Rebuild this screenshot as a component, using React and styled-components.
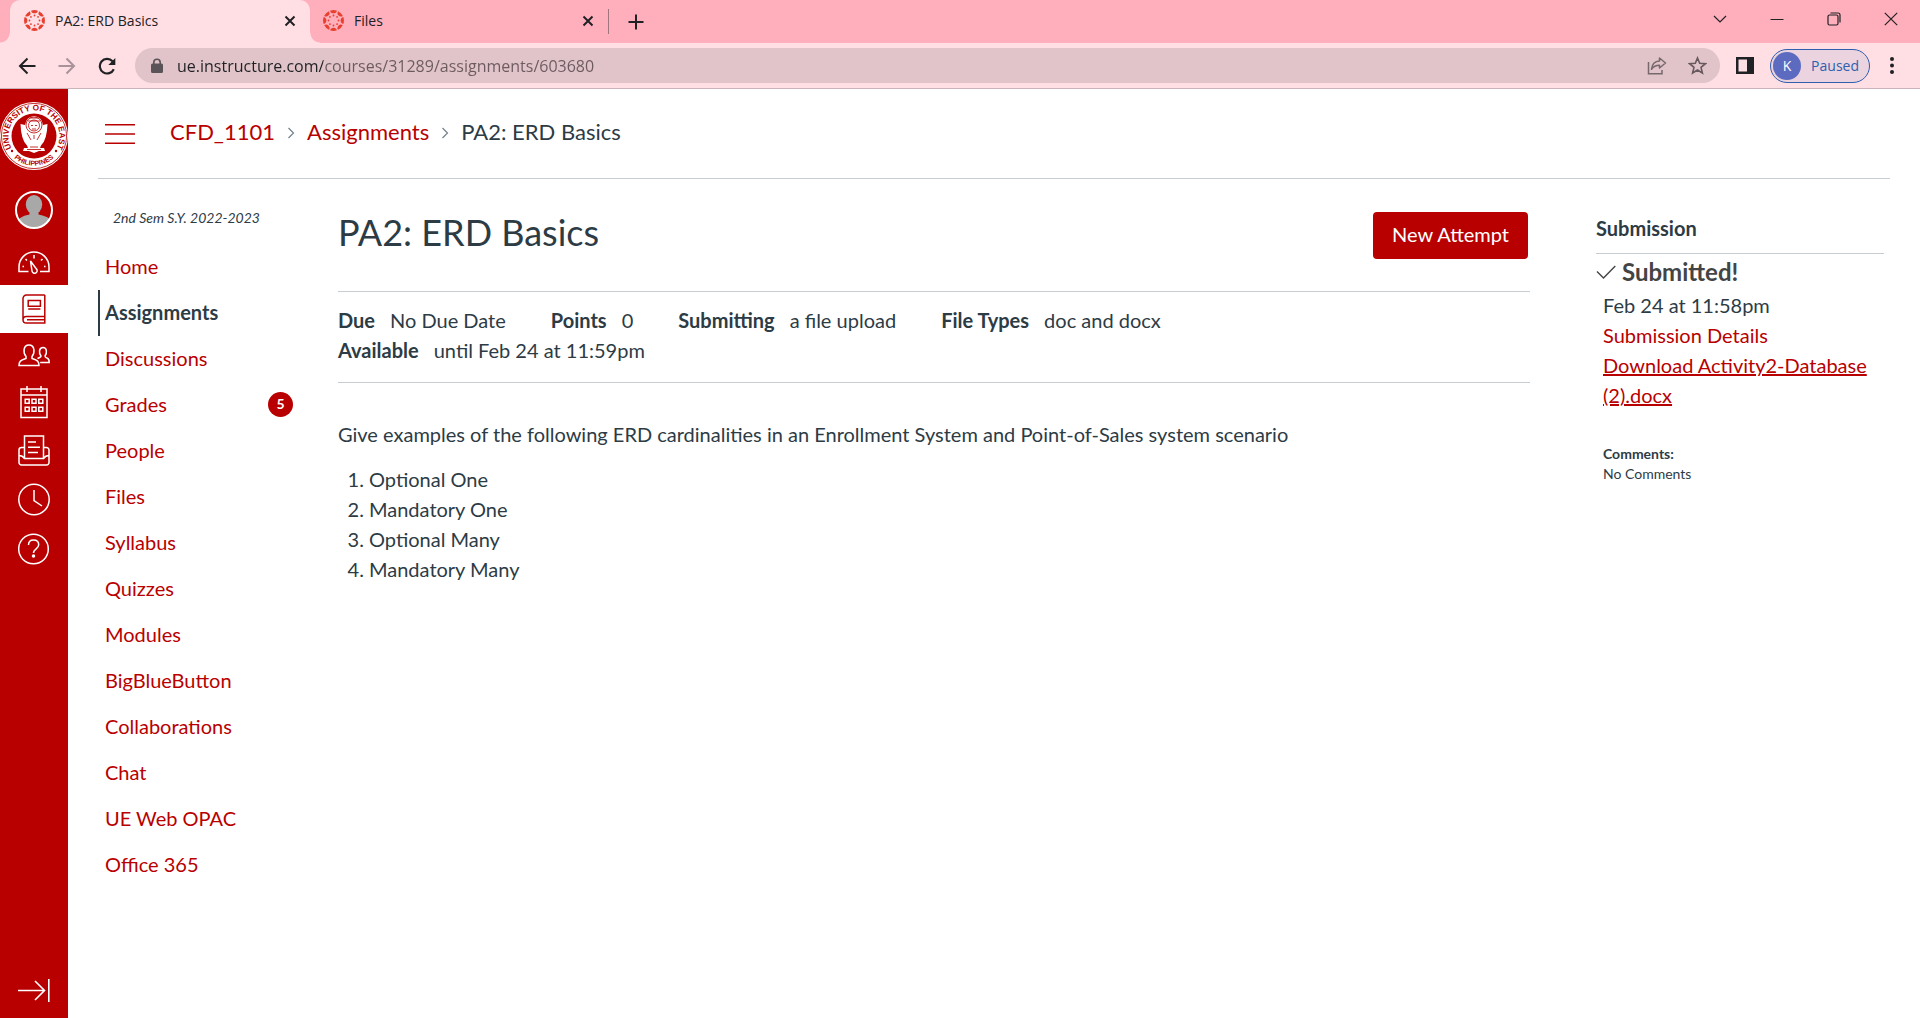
import React from "react";
import styled, { createGlobalStyle } from "styled-components";

const RED = "#b90000";
const INK = "#2d3b45";
const RULE = "#c7cdd1";
const CHROME_FONT = '"Open Sans", "Noto Sans", sans-serif';

const GlobalStyle = createGlobalStyle`
  *, *::before, *::after { box-sizing: border-box; }
  body { margin: 0; background: #fff; color: ${INK}; font: 20px/30px Lato, "Liberation Sans", sans-serif; }
  a { color: ${RED}; text-decoration: none; }
  button { font: inherit; color: inherit; border: 0; background: none; padding: 0; cursor: pointer; }
  svg { display: block; flex: none; }
`;

const Page = styled.div`
  display: flex;
  flex-direction: column;
  min-height: 100vh;
`;

/* ---------- browser chrome ---------- */

const TabStrip = styled.div`
  display: flex;
  align-items: center;
  height: 43px;
  padding: 0 0 0 10px;
  background: #ffaebc;
  color: #202124;
  font: 14px/20px ${CHROME_FONT};
`;

const Tab = styled.div`
  position: relative;
  display: flex;
  align-items: center;
  gap: 10px;
  width: ${(p) => (p.$active ? 300 : 298)}px;
  height: 43px;
  padding: 0 12px 2px ${(p) => (p.$active ? 14 : 13)}px;
  border-radius: 10px 10px 0 0;
  background: ${(p) => (p.$active ? "#ffdee4" : "transparent")};
  ${(p) =>
    p.$active &&
    `
    &::before, &::after {
      content: "";
      position: absolute;
      bottom: 0;
      width: 10px;
      height: 10px;
    }
    &::before {
      left: -10px;
      background: radial-gradient(circle at 0 0, transparent 9px, #ffdee4 10px);
    }
    &::after {
      right: -10px;
      background: radial-gradient(circle at 100% 0, transparent 9px, #ffdee4 10px);
    }
  `}
`;

const TabTitle = styled.span`
  flex: 1;
`;

const IconButton = styled.button`
  display: grid;
  place-items: center;
  width: ${(p) => p.$w || 20}px;
  height: ${(p) => p.$h || 20}px;
`;

const TabDivider = styled.span`
  width: 1px;
  height: 25px;
  margin-right: 17px;
  background: #a0757d;
`;

const WindowControls = styled.div`
  display: flex;
  align-items: center;
  margin-left: auto;
  height: 37px;
  align-self: flex-start;
`;

const Toolbar = styled.div`
  display: flex;
  align-items: center;
  height: 46px;
  padding: 0 18px 0 7px;
  background: #ffdee4;
  border-bottom: 1px solid #cbb3ba;
  color: #202124;
  font-family: ${CHROME_FONT};
`;

const AddressBar = styled.label`
  display: flex;
  align-items: center;
  flex: 1;
  height: 35px;
  margin-left: 8px;
  padding: 0 7px 0 16px;
  border-radius: 18px;
  background: #e0c4c9;
`;

const AddressInput = styled.input`
  flex: 1;
  min-width: 0;
  height: 30px;
  margin-left: 14px;
  padding: 0;
  border: 0;
  outline: 0;
  font: 16px/24px ${CHROME_FONT};
  color: #6b5a5e;
  background: linear-gradient(90deg, #202124 146px, #6b5a5e 146px);
  background-clip: text;
  -webkit-background-clip: text;
  -webkit-text-fill-color: transparent;
`;

const ProfileChip = styled.button`
  display: flex;
  align-items: center;
  gap: 10px;
  height: 34px;
  margin: 0 12px 0 0;
  padding: 0 10px 0 2px;
  border: 1px solid #2f5fae;
  border-radius: 18px;
  background: #ebd3e0;
  color: #2f5fae;
  font-size: 14px;
  line-height: 20px;
`;

const ProfileInitial = styled.span`
  width: 28px;
  height: 28px;
  border-radius: 50%;
  background: #5c6bc0;
  color: #fff;
  line-height: 28px;
  text-align: center;
`;

/* ---------- global navigation ---------- */

const Workspace = styled.div`
  display: flex;
  flex: 1;
`;

const GlobalNav = styled.nav`
  display: flex;
  flex-direction: column;
  flex: none;
  width: 68px;
  padding-top: 10px;
  background: ${RED};
`;

const NavLink = styled.a`
  display: grid;
  place-items: center;
  height: ${(p) => p.$h || 49}px;
  margin-bottom: ${(p) => p.$gap || 0}px;
  color: ${(p) => (p.$active ? RED : "#fff")};
  background: ${(p) => (p.$active ? "#fff" : "transparent")};
`;

const CollapseButton = styled.button`
  display: grid;
  place-items: center;
  height: 56px;
  margin-top: auto;
  color: #fff;
`;

/* ---------- page ---------- */

const Main = styled.div`
  flex: 1;
  min-width: 0;
  padding: 0 30px;
`;

const Header = styled.header`
  display: flex;
  align-items: center;
  gap: 35px;
  height: 90px;
  padding-left: 7px;
  border-bottom: 1px solid ${RULE};
`;

const Crumbs = styled.ol`
  display: flex;
  align-items: center;
  gap: 12px;
  margin: 0;
  padding: 0 0 4px;
  list-style: none;
  font-size: 22px;
  line-height: 32px;
`;

const Crumb = styled.li`
  display: flex;
  align-items: center;
  gap: 12px;
`;

const Columns = styled.div`
  display: flex;
`;

const CourseNav = styled.nav`
  flex: none;
  width: 195px;
  padding-top: 27px;
`;

const Term = styled.p`
  margin: 0 0 14px;
  padding-left: 15px;
  font-size: 14px;
  line-height: 24px;
  font-style: italic;
`;

const CourseList = styled.ul`
  margin: 0;
  padding: 0;
  list-style: none;
`;

const CourseLink = styled.a`
  display: flex;
  align-items: center;
  justify-content: space-between;
  height: 46px;
  padding: 0 0 2px 5px;
  border-left: 2px solid ${(p) => (p.$active ? INK : "transparent")};
  color: ${(p) => (p.$active ? INK : RED)};
  font-weight: ${(p) => (p.$active ? 700 : 400)};
`;

const Badge = styled.span`
  width: 25px;
  height: 25px;
  border-radius: 50%;
  background: ${RED};
  color: #fff;
  font-size: 14px;
  font-weight: 700;
  line-height: 24px;
  text-align: center;
`;

const Content = styled.main`
  flex: 1;
  min-width: 0;
  margin-left: 45px;
  padding-top: 33px;
`;

const TitleRow = styled.div`
  display: flex;
  justify-content: space-between;
  height: 79px;
  padding-right: 2px;
`;

const Title = styled.h1`
  margin: 0;
  font-size: 36px;
  line-height: 40px;
  font-weight: 400;
`;

const PrimaryButton = styled.button`
  height: 47px;
  padding: 0 19px 4px;
  border-radius: 4px;
  background: ${RED};
  color: #fff;
`;

const Details = styled.dl`
  display: flex;
  flex-wrap: wrap;
  column-gap: 45px;
  margin: 0;
  padding: 13px 0 17px;
  border: solid ${RULE};
  border-width: 1px 0;
`;

const Detail = styled.div`
  display: flex;
  gap: 15px;
  flex-basis: ${(p) => (p.$row ? "100%" : "auto")};
  dt { font-weight: 700; }
  dd { margin: 0; }
`;

const Description = styled.section`
  padding-top: 36px;
  p { margin: 0 0 15px; }
  ol { margin: 0; padding-left: 31px; }
`;

const Aside = styled.aside`
  flex: none;
  width: 288px;
  margin: 34px 6px 0 66px;
`;

const AsideTitle = styled.h2`
  margin: 0 0 1px;
  padding-bottom: 10px;
  border-bottom: 1px solid ${RULE};
  font-size: 20px;
  line-height: 30px;
`;

const Status = styled.h3`
  display: flex;
  align-items: center;
  gap: 6px;
  margin: 0 0 1px;
  color: #444;
  font-size: 24px;
  line-height: 34px;
`;

const AsideBody = styled.div`
  display: flex;
  flex-direction: column;
  align-items: flex-start;
  padding-left: 7px;
`;

const FileLink = styled.a`
  text-decoration: underline;
`;

const Comments = styled.div`
  margin-top: 34px;
  font-size: 14px;
  line-height: 20px;
`;

const CommentsTitle = styled.strong`
  display: block;
`;

/* ---------- drawings ---------- */

const Line = ({ w = 20, h = w, box, sw = 1.5, children }) => (
  <svg width={w} height={h} viewBox={box || `0 0 ${w} ${h}`} fill="none" stroke="currentColor" strokeWidth={sw} aria-hidden="true">
    {children}
  </svg>
);

const CanvasMark = () => (
  <svg width="21" height="21" viewBox="-13 -13 26 26" fill="#e8402f" aria-hidden="true">
    {[0, 45, 90, 135, 180, 225, 270, 315].map((a) => (
      <g key={a} transform={`rotate(${a})`}>
        <path d="M-4.2 -12.2A13 13 0 0 1 4.2 -12.2A4.3 4.3 0 0 1 -4.2 -12.2Z" />
        <circle cy="-6.2" r="1.1" />
      </g>
    ))}
  </svg>
);

const CloseIcon = () => (
  <Line w={12} sw={2}>
    <path d="M1.500 1.500l9 9M10.500 1.500l-9 9" />
  </Line>
);

const Seal = () => (
  <svg width="68" height="68" viewBox="-34 -34 68 68" aria-hidden="true">
    <defs>
      <path id="sealTop" d="M-22.600 11.800A25.500 25.500 0 1 1 22.600 11.800" />
      <path id="sealBottom" d="M-28.500 8A29.600 29.600 0 0 0 28.500 8" />
    </defs>
    <circle r="34" fill="#fff" />
    <circle r="32.600" fill="none" stroke={RED} strokeWidth="0.800" />
    <circle r="22.500" fill={RED} />
    <text fill={RED} fontFamily="Liberation Sans, sans-serif" fontWeight="700" fontSize="8.200">
      <textPath href="#sealTop" startOffset="50%" textAnchor="middle">UNIVERSITY OF THE EAST</textPath>
    </text>
    <text fill={RED} fontFamily="Liberation Sans, sans-serif" fontWeight="700" fontSize="7">
      <textPath href="#sealBottom" startOffset="50%" textAnchor="middle">PHILIPPINES</textPath>
    </text>
    <circle cx="-22" cy="15" r="1.200" fill={RED} />
    <circle cx="22" cy="15" r="1.200" fill={RED} />
    <path d="M-13.500 -12L-9 -11Q-8 -19 0 -20Q8 -19 9 -11L13.500 -12Q13 4 7 9.500L6 12H10L11 15H5L0 17L-5 15H-11L-10 12H-6L-7 9.500Q-13 4 -13.500 -12Z" fill="#fff" />
    <g fill="none" stroke={RED} strokeWidth="0.800">
      <circle cy="-11" r="8" />
      <circle cy="-10.500" r="5.500" />
      <path d="M-6 -15H6M-4 -18H4M-3 -10.500H-1M1 -10.500H3M-2 -7H2M-7 -3L-3 4M7 -3L3 4M0 -1V3M-4 11H4M-7 13.500H7" />
    </g>
  </svg>
);

const Avatar = () => (
  <svg width="38" height="38" viewBox="0 0 38 38" aria-hidden="true">
    <defs>
      <clipPath id="face"><circle cx="19" cy="19" r="17.500" /></clipPath>
    </defs>
    <g clipPath="url(#face)" fill="#a8a8a8">
      <ellipse cx="19" cy="13.500" rx="8.200" ry="9.500" />
      <path d="M14.500 20h9v3.500q12 2 14 9V38H1v-5q2-7.500 13.500-9.500z" />
    </g>
    <circle cx="19" cy="19" r="18" fill="none" stroke="#fff" strokeWidth="2" />
  </svg>
);

const Dashboard = () => (
  <Line w={32} h={23}>
    <path d="M10.500 20.500H1v-4.500a15 15 0 0 1 30 0v4.500h-9" />
    <path d="M16 4v3.500M7.500 8l1.500 1.500M24.500 8L23 9.500M4.500 15.500H6M26 15.500h1.500" />
    <path d="M12.500 10l5.500 7.500a2.600 2.600 0 1 1-4 2.500z" />
  </Line>
);

const Courses = () => (
  <Line w={24} h={30}>
    <path d="M22.800 1H4.500A3.500 3.500 0 0 0 1 4.500v21.200A3.300 3.300 0 0 0 4.300 29h18.500v-6.500H4.300A3.300 3.300 0 0 0 1 25.700M22.800 1v21.500M5 25.800h17.800" />
    <path d="M6.200 6.500h12.200v5.700H6.200zM6.200 15h12.200" />
  </Line>
);

const Groups = () => (
  <Line w={32} h={23}>
    <path d="M1 21.500c0-4.500 1.500-5 7-7v-2c-3-3.500-3-11.500 3-11.500s6 8 3 11.500v2c5.500 2 7 2.500 7 7z" />
    <path d="M19.500 14.500c3-1 3.500-1.200 3.500-2.500-2.500-3-2-8.500 2-8.500s4.300 5.500 2 8.500c0 1.500.5 1.700 2.500 2.300 1.500.7 1.700 2.200 1.700 4.200h-9" />
  </Line>
);

const Calendar = () => (
  <Line w={28} h={34}>
    <path d="M1 4h26v28.500H1zM1 10h26M7 1v6M21 1v6" />
    <path d="M5.200 14.200h4v4h-4zM12 14.200h4v4h-4zM18.800 14.200h4v4h-4zM5.200 22.200h4v4h-4zM12 22.200h4v4h-4zM18.800 22.200h4v4h-4z" />
  </Line>
);

const Inbox = () => (
  <Line w={32} h={31}>
    <path d="M6.500 23.500V1h19v22.500M10 7h8M10 12.300h12M10 17.600h10" />
    <path d="M6.500 12.500H3.500A2.500 2.500 0 0 0 1 15v12.500A2.500 2.500 0 0 0 3.500 30h25a2.500 2.500 0 0 0 2.500-2.500V15a2.500 2.500 0 0 0-2.500-2.500h-3M1 20.500q3.500 0 5.500 3h19q2-3 5.500-3" />
  </Line>
);

const History = () => (
  <Line w={32} h={33}>
    <circle cx="16" cy="16.500" r="15.200" />
    <path d="M16 7v10.500l8 5.500" />
  </Line>
);

const Help = () => (
  <Line w={32} h={32}>
    <circle cx="15.500" cy="16" r="14.800" />
    <path d="M10.500 12c0-3 2-5 5-5s5.200 1.800 5.200 4.800c0 4-5.200 4-5.200 8.200" />
    <circle cx="15.500" cy="23" r="1" fill="currentColor" />
  </Line>
);

const Chevron = () => (
  <Line w={8} h={14} sw={1.2}>
    <path d="M1.500 3l5 5-5 5" stroke="#73818c" />
  </Line>
);

/* ---------- data ---------- */

const tabs = [
  { title: "PA2: ERD Basics", active: true },
  { title: "Files", active: false },
];

const globalLinks = [
  { label: "University of the East", icon: Seal, h: 74 },
  { label: "Account", icon: Avatar, h: 74 },
  { label: "Dashboard", icon: Dashboard, h: 30, gap: 8 },
  { label: "Courses", icon: Courses, active: true, h: 48 },
  { label: "Groups", icon: Groups, h: 44 },
  { label: "Calendar", icon: Calendar, h: 49 },
  { label: "Inbox", icon: Inbox },
  { label: "History", icon: History },
  { label: "Help", icon: Help },
];

const courseLinks = [
  "Home", "Assignments", "Discussions", "Grades", "People", "Files", "Syllabus", "Quizzes",
  "Modules", "BigBlueButton", "Collaborations", "Chat", "UE Web OPAC", "Office 365",
];

const details = [
  ["Due", "No Due Date"],
  ["Points", "0"],
  ["Submitting", "a file upload"],
  ["File Types", "doc and docx"],
  ["Available", "until Feb 24 at 11:59pm"],
];

const cardinalities = ["Optional One", "Mandatory One", "Optional Many", "Mandatory Many"];

export default function App() {
  return (
    <Page>
      <GlobalStyle />
      <TabStrip>
        {tabs.map((t) => (
          <Tab key={t.title} $active={t.active}>
            <CanvasMark />
            <TabTitle>{t.title}</TabTitle>
            <IconButton $w={16} aria-label={`Close ${t.title}`}><CloseIcon /></IconButton>
          </Tab>
        ))}
        <TabDivider />
        <IconButton aria-label="New tab">
          <Line w={16} sw={2}><path d="M8 .5v15M.5 8h15" /></Line>
        </IconButton>
        <WindowControls>
          <IconButton $w={57} aria-label="Search tabs">
            <Line w={14} sw={1.2}><path d="M1 4l6 6 6-6" /></Line>
          </IconButton>
          <IconButton $w={57} aria-label="Minimize">
            <Line w={14} sw={1}><path d="M.5 7.500h13" /></Line>
          </IconButton>
          <IconButton $w={57} aria-label="Restore">
            <Line w={14} sw={1.2}>
              <rect x="1" y="3" width="10" height="10" rx="1.500" />
              <path d="M3.500 1H11a2 2 0 0 1 2 2v7.500" />
            </Line>
          </IconButton>
          <IconButton $w={58} aria-label="Close window">
            <Line w={14} sw={1.2}><path d="M.8 .8l12.400 12.400M13.200 .8L.8 13.200" /></Line>
          </IconButton>
        </WindowControls>
      </TabStrip>
      <Toolbar>
        <IconButton $w={40} aria-label="Back">
          <Line w={18} sw={2}><path d="M17.500 9H2M9.500 1.500L2 9l7.500 7.500" /></Line>
        </IconButton>
        <IconButton $w={40} aria-label="Forward">
          <Line w={18} sw={2}><path d="M.5 9H16M8.500 1.500L16 9l-7.500 7.500" stroke="#a8939a" /></Line>
        </IconButton>
        <IconButton $w={40} aria-label="Reload">
          <Line w={18} sw={2.2}>
            <path d="M15.800 12.200A7.300 7.300 0 1 1 14.500 4.200" />
            <path d="M17.300 1v7h-7z" fill="currentColor" stroke="none" />
          </Line>
        </IconButton>
        <AddressBar>
          <svg width="12" height="16" viewBox="0 0 12 16" fill="#5a5358" aria-hidden="true">
            <path fillRule="evenodd" d="M1.500 5.500H2V4.500a4 4 0 0 1 8 0v1h.5A1.500 1.500 0 0 1 12 7v6.500a1.500 1.500 0 0 1-1.500 1.500h-9A1.500 1.500 0 0 1 0 13.500V7a1.500 1.500 0 0 1 1.500-1.500zM3.600 5.500h4.800v-1a2.400 2.400 0 0 0-4.800 0z" />
          </svg>
          <AddressInput aria-label="Address" defaultValue="ue.instructure.com/courses/31289/assignments/603680" />
          <IconButton $w={48} aria-label="Share this page">
            <Line w={20} sw={1.5}>
              <g stroke="#77686c">
                <path d="M1.500 6v11.800h13.500V14" />
                <path d="M12.500 2l6 5-6 5V9.300c-4 0-6 1-8 4 .5-5 3-8 8-8.300z" strokeLinejoin="round" />
              </g>
            </Line>
          </IconButton>
          <IconButton $w={32} aria-label="Bookmark this page">
            <Line w={19} sw={1.6}>
              <path stroke="#67595d" d="M9.500 2l2.200 5.300 5.700.4-4.400 3.700 1.400 5.600-4.900-3-4.900 3L6 11.400 1.600 7.700l5.700-.4z" />
            </Line>
          </IconButton>
        </AddressBar>
        <IconButton $w={50} aria-label="Side panel">
          <svg width="18" height="17" viewBox="0 0 18 17" aria-hidden="true">
            <path fillRule="evenodd" fill="#202124" d="M0 0h18v17H0zM2.500 2.500v12h8.500v-12z" />
          </svg>
        </IconButton>
        <ProfileChip>
          <ProfileInitial>K</ProfileInitial>
          Paused
        </ProfileChip>
        <IconButton aria-label="Menu">
          <svg width="4" height="17" viewBox="0 0 4 17" fill="#202124" aria-hidden="true">
            <circle cx="2" cy="2" r="2" /><circle cx="2" cy="8.500" r="2" /><circle cx="2" cy="15" r="2" />
          </svg>
        </IconButton>
      </Toolbar>
      <Workspace>
        <GlobalNav aria-label="Global">
          {globalLinks.map(({ label, icon: Icon, active, h, gap }) => (
            <NavLink key={label} href="#" aria-label={label} $active={active} $h={h} $gap={gap}>
              <Icon />
            </NavLink>
          ))}
          <CollapseButton aria-label="Expand navigation">
            <Line w={32} h={24} sw={1.6}>
              <path d="M0 12.500h26M17 3l9.500 9.500L17 22M30.800 1v23" />
            </Line>
          </CollapseButton>
        </GlobalNav>
        <Main>
          <Header>
            <IconButton $w={30} aria-label="Toggle course navigation">
              <svg width="30" height="20" viewBox="0 0 30 20" fill={RED} aria-hidden="true">
                <path d="M0 0h30v1.600H0zM0 9.200h30v1.600H0zM0 18.400h30v1.600H0z" />
              </svg>
            </IconButton>
            <nav aria-label="Breadcrumb">
              <Crumbs>
                <Crumb><a href="#">CFD_1101</a><Chevron /></Crumb>
                <Crumb><a href="#">Assignments</a><Chevron /></Crumb>
                <Crumb>PA2: ERD Basics</Crumb>
              </Crumbs>
            </nav>
          </Header>
          <Columns>
            <CourseNav aria-label="Course">
              <Term>2nd Sem S.Y. 2022-2023</Term>
              <CourseList>
                {courseLinks.map((name) => (
                  <li key={name}>
                    <CourseLink href="#" $active={name === "Assignments"}>
                      {name}
                      {name === "Grades" && <Badge>5</Badge>}
                    </CourseLink>
                  </li>
                ))}
              </CourseList>
            </CourseNav>
            <Content>
              <TitleRow>
                <Title>PA2: ERD Basics</Title>
                <PrimaryButton>New Attempt</PrimaryButton>
              </TitleRow>
              <Details>
                {details.map(([term, value]) => (
                  <Detail key={term} $row={term === "Available"}>
                    <dt>{term}</dt>
                    <dd>{value}</dd>
                  </Detail>
                ))}
              </Details>
              <Description>
                <p>Give examples of the following ERD cardinalities in an Enrollment System and Point-of-Sales system scenario</p>
                <ol>
                  {cardinalities.map((c) => <li key={c}>{c}</li>)}
                </ol>
              </Description>
            </Content>
            <Aside>
              <AsideTitle>Submission</AsideTitle>
              <Status>
                <Line w={20} h={16} sw={1.4}><path d="M1 7.500l6.500 6.500L19.300 2" /></Line>
                Submitted!
              </Status>
              <AsideBody>
                <span>Feb 24 at 11:58pm</span>
                <a href="#">Submission Details</a>
                <FileLink href="#">Download Activity2-Database (2).docx</FileLink>
                <Comments>
                  <CommentsTitle>Comments:</CommentsTitle>
                  No Comments
                </Comments>
              </AsideBody>
            </Aside>
          </Columns>
        </Main>
      </Workspace>
    </Page>
  );
}
